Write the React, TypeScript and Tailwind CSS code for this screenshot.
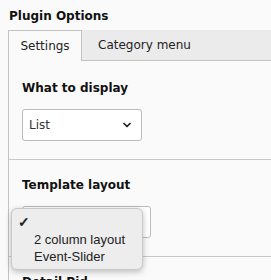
import { ChevronDown } from 'lucide-react'

const verdana = { fontFamily: '"DejaVu Sans", Verdana, sans-serif' }

function Select({ value, width }: { value: string; width: string }) {
  return (
    <div
      className={`flex h-[32px] ${width} items-center justify-between rounded-[3px] border border-[#bbbbbb] bg-white pl-[6px] pr-[8px] text-[12px] text-[#333]`}
    >
      <span>{value}</span>
      <ChevronDown size={12} strokeWidth={3.5} className="text-[#222]" />
    </div>
  )
}

export default function App() {
  return (
    <div className="relative h-[280px] w-[271px] overflow-hidden bg-[#fafafa] text-[#111]" style={verdana}>
      <h1 className="pl-[9px] pt-[9px] text-[12px] font-bold leading-[14px]">Plugin Options</h1>

      <div className="mt-[7px] flex h-[31px] pl-[8px]">
        <div className="flex w-[74px] items-center justify-center border border-b-0 border-[#c3c3c3] bg-[#fafafa] text-[12px] text-[#222]">
          Settings
        </div>
        <div className="flex flex-1 items-center border-b border-[#c3c3c3] bg-[#ebebeb] pl-[16px] text-[12px] text-[#222]">
          Category menu
        </div>
      </div>

      <div className="ml-[8px] border-l border-[#c3c3c3]">
        <section className="border-b border-[#c9c9c9] pb-[18px] pl-[13px] pt-[20px]">
          <h2 className="text-[12px] font-bold leading-[14px]">What to display</h2>
          <div className="mt-[14px]">
            <Select value="List" width="w-[120px]" />
          </div>
        </section>

        <section className="border-b border-[#c9c9c9] pb-[18px] pl-[13px] pt-[18px]">
          <h2 className="text-[12px] font-bold leading-[14px]">Template layout</h2>
          <div className="mt-[14px]">
            <Select value="" width="w-[129px]" />
          </div>
        </section>

        <section className="pl-[13px] pt-[18px]">
          <h2 className="text-[12px] font-bold leading-[14px]">Detail Pid</h2>
        </section>
      </div>

      <div
        className="absolute left-[11px] top-[208px] w-[132px] rounded-[6px] border border-[#c8c8c8] bg-[#ededed] pb-[4px] pt-[5px] text-[13px] leading-[17px] text-[#222] shadow-[0_2px_6px_rgba(0,0,0,0.25)]"
        style={{ fontFamily: '"Liberation Sans", Arial, sans-serif' }}
      >
        <div className="flex h-[17px] items-center pl-[6px]">
          <span className="text-[14px] font-bold">✓</span>
        </div>
        <div className="pl-[22px]">2 column layout</div>
        <div className="pl-[22px]">Event-Slider</div>
      </div>
    </div>
  )
}
